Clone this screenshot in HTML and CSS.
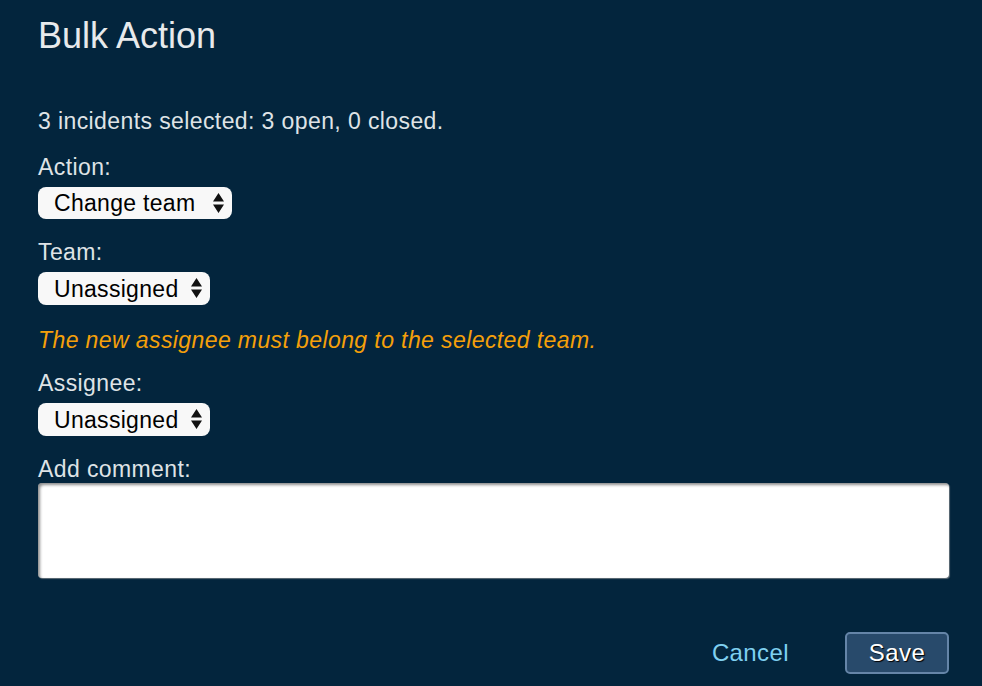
FILE: index.html
```html
<!DOCTYPE html>
<html lang="en">
<head>
    <meta charset="UTF-8">
    <meta name="viewport" content="width=device-width, initial-scale=1.0">
    <title>Bulk Action</title>
    <link rel="stylesheet" href="styles.css">
</head>
<body>

    <div class="bulk-dialog">
        <h1 class="dialog-title">Bulk Action</h1>

        <p class="summary">3 incidents selected: 3 open, 0 closed.</p>

        <div class="field">
            <label for="action">Action:</label>
            <div class="select-wrap">
                <select id="action" class="select-wide">
                    <option>Change team</option>
                    <option>Change assignee</option>
                    <option>Close</option>
                </select>
                <svg class="arrows" width="11" height="20" viewBox="0 0 11 20"><path d="M5.5 0 L11 8.5 H0 Z M0 11.5 H11 L5.5 20 Z" fill="#111"/></svg>
            </div>
        </div>

        <div class="field">
            <label for="team">Team:</label>
            <div class="select-wrap">
                <select id="team">
                    <option>Unassigned</option>
                </select>
                <svg class="arrows" width="11" height="20" viewBox="0 0 11 20"><path d="M5.5 0 L11 8.5 H0 Z M0 11.5 H11 L5.5 20 Z" fill="#111"/></svg>
            </div>
        </div>

        <p class="note">The new assignee must belong to the selected team.</p>

        <div class="field">
            <label for="assignee">Assignee:</label>
            <div class="select-wrap">
                <select id="assignee">
                    <option>Unassigned</option>
                </select>
                <svg class="arrows" width="11" height="20" viewBox="0 0 11 20"><path d="M5.5 0 L11 8.5 H0 Z M0 11.5 H11 L5.5 20 Z" fill="#111"/></svg>
            </div>
        </div>

        <div class="field comment-field">
            <label for="comment">Add comment:</label>
            <textarea id="comment"></textarea>
        </div>

        <div class="actions">
            <button class="btn-link">Cancel</button>
            <button class="btn-save">Save</button>
        </div>
    </div>

</body>
</html>
```

FILE: styles.css
```css
body {
    font-family: "Liberation Sans", Arial, sans-serif;
    background-color: #03253d;
    color: #dfe3e6;
    margin: 0;
}

.bulk-dialog {
    padding: 15px 33px 12px 38px;
}

.dialog-title {
    font-size: 36px;
    line-height: 41px;
    font-weight: normal;
    color: #e8eaec;
    margin: 0 0 52px;
}

.summary,
.note,
.field label {
    font-size: 23px;
    line-height: 26px;
    letter-spacing: 0.4px;
}

.summary {
    margin: 0 0 20px;
}

.field {
    margin-bottom: 20px;
}

.field label {
    display: block;
    margin-bottom: 7px;
}

.select-wrap {
    position: relative;
    display: inline-block;
    vertical-align: top;
}

.select-wrap select {
    appearance: none;
    -webkit-appearance: none;
    display: block;
    font-family: inherit;
    font-size: 23px;
    letter-spacing: 0.3px;
    color: #000;
    background-color: #f8f8f8;
    border: none;
    border-radius: 8px;
    width: 172px;
    height: 33px;
    padding: 0 0 0 16px;
    margin: 0;
    outline: none;
}

.select-wrap .select-wide {
    width: 194px;
    height: 32px;
}

.arrows {
    position: absolute;
    right: 8px;
    top: 6px;
    pointer-events: none;
}

.note {
    font-style: italic;
    color: #f5a00a;
    margin: 22px 0 17px;
}

.comment-field label {
    margin-bottom: 1px;
}

.field textarea {
    display: block;
    box-sizing: border-box;
    width: 100%;
    height: 95px;
    border: none;
    border-radius: 4px;
    background-color: #fff;
    box-shadow: inset 2px 2px 3px rgba(0, 0, 0, 0.45), 1px 1px 1px rgba(160, 160, 160, 0.6);
    resize: none;
    margin: 0;
}

.actions {
    display: flex;
    justify-content: flex-end;
    align-items: center;
    gap: 56px;
    margin-top: 54px;
}

.btn-link {
    background: none;
    border: none;
    font-family: inherit;
    font-size: 24px;
    letter-spacing: 0.4px;
    color: #7fd0f0;
    padding: 0;
    cursor: pointer;
}

.btn-save {
    font-family: inherit;
    font-size: 24px;
    letter-spacing: 0.4px;
    color: #fff;
    text-shadow: 1px 1px 1px #000;
    background-color: #284a6b;
    border: 2px solid #6585a8;
    border-radius: 5px;
    width: 104px;
    height: 42px;
    cursor: pointer;
}
```
